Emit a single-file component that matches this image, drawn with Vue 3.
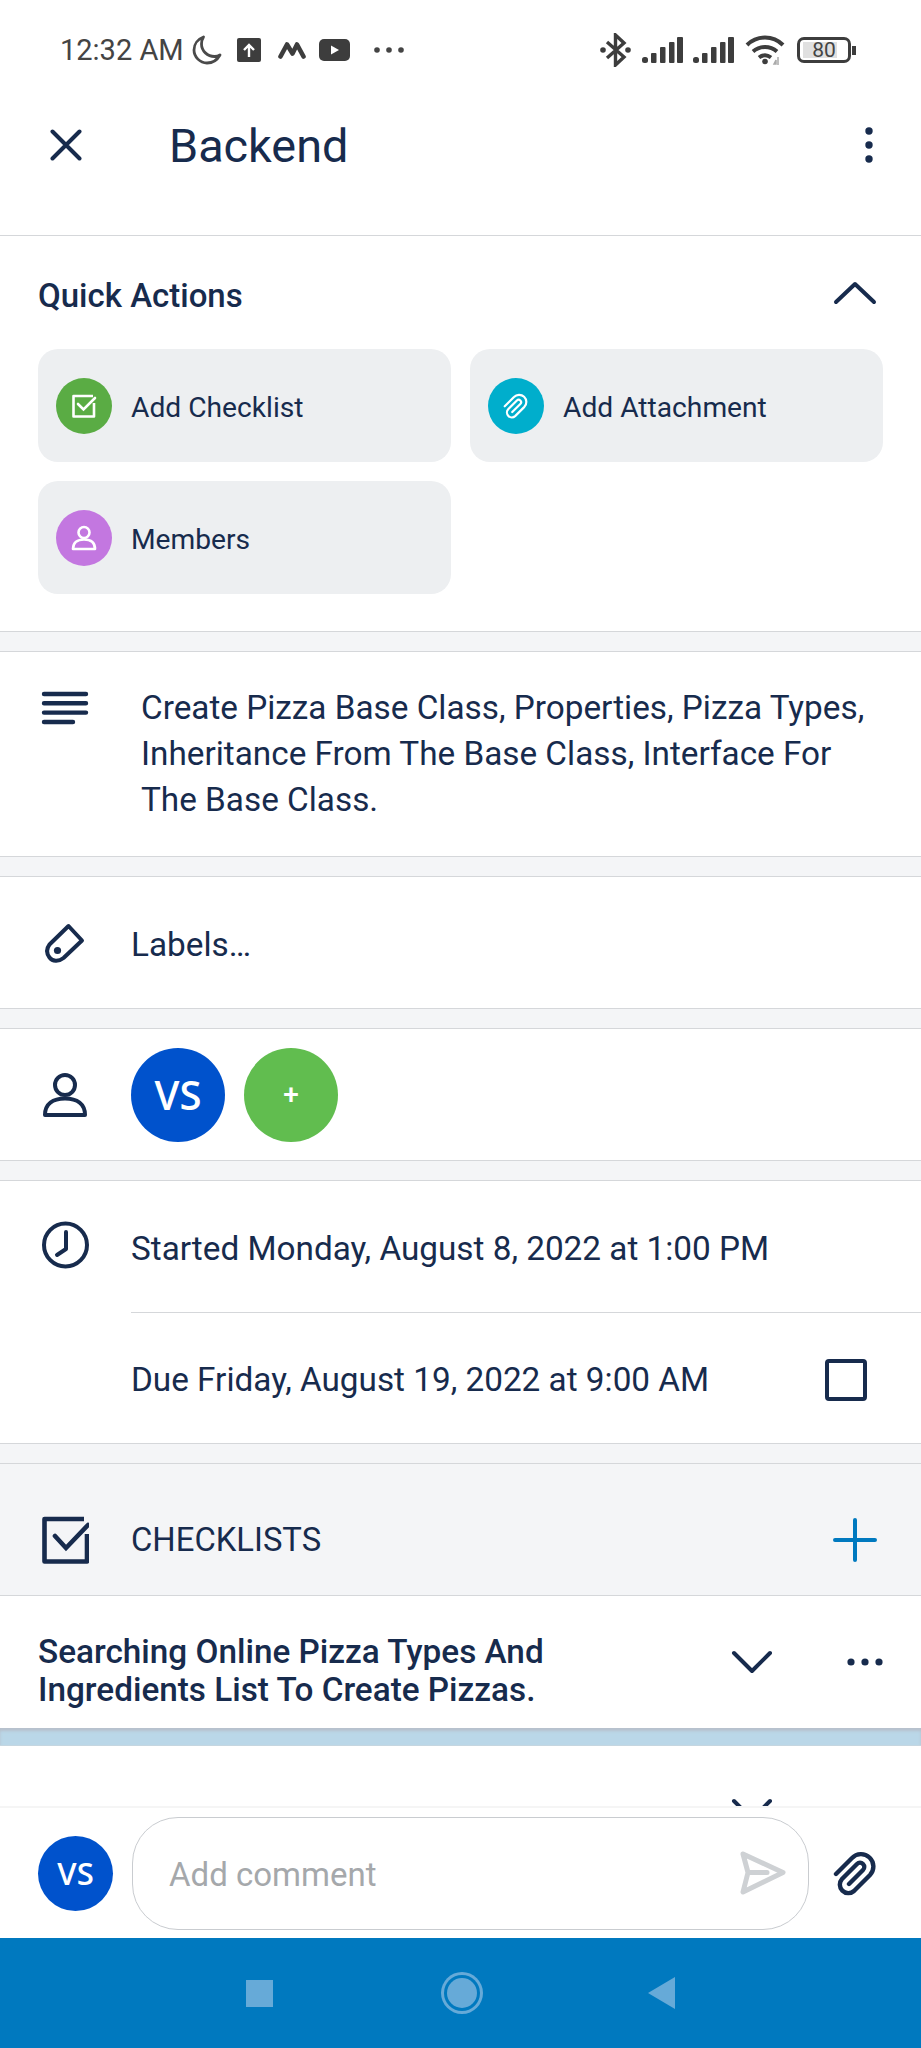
<script setup>
const clip = "M3 23 L19 7 A12 12 0 0 1 37 24 L21 40 A8.500 8.500 0 0 1 9 28 L24 13 A4 4 0 0 1 30 19 L16 33";
</script>

<template>
  <div class="page">
    <div class="status">
      <span class="time">12:32 AM</span>
      <svg class="moon" viewBox="0 0 30 30" width="30" height="30"><path d="M11.500 2C6 4 2 9 2 15c0 7 6 13 13 13 6 0 10.500-3.500 13-8-1.500 1-3.500 1.500-5.500 1.500-7 0-13-5.500-13-12.500 0-2.500.7-5 2-7z" fill="none" stroke="#4a4a4a" stroke-width="2.800" stroke-linejoin="round"/></svg>
      <svg class="st-up" viewBox="0 0 24 24" width="24" height="24"><rect width="24" height="24" rx="2" fill="#3d3d3d"/><path d="M12 19V7M7 12l5-5 5 5" fill="none" stroke="#fff" stroke-width="2.400"/></svg>
      <svg class="st-m" viewBox="0 0 28 18" width="28" height="18"><path d="M2.500 15.500 9 3.500l5.500 9L19 3.500l6.500 12" fill="none" stroke="#3d3d3d" stroke-width="4.600" stroke-linecap="round" stroke-linejoin="round"/></svg>
      <svg class="st-yt" viewBox="0 0 31 22" width="31" height="22"><rect width="31" height="22" rx="5" fill="#3d3d3d"/><path d="M12 6.500v9l8-4.500z" fill="#fff"/></svg>
      <svg class="st-dots" viewBox="0 0 30 6" width="30" height="6"><circle cx="3" cy="3" r="2.800" fill="#444"/><circle cx="15" cy="3" r="2.800" fill="#444"/><circle cx="27" cy="3" r="2.800" fill="#444"/></svg>
      <span class="spacer"></span>
      <svg class="st-bt" viewBox="0 0 31 34" width="31" height="34"><path d="M7 9 24 24 15.500 32V2L24 10 7 25" fill="none" stroke="#3d3d3d" stroke-width="3.400"/><circle cx="3" cy="17" r="2.800" fill="#3d3d3d"/><circle cx="28" cy="17" r="2.800" fill="#3d3d3d"/></svg>
      <svg class="st-sig" viewBox="0 0 41 26" width="41" height="26"><rect x="0" y="20" width="6" height="6" rx="2.500" fill="#3d3d3d"/><rect x="9" y="16" width="5.500" height="10" rx="1" fill="#3d3d3d"/><rect x="18" y="10" width="5.500" height="16" rx="1" fill="#3d3d3d"/><rect x="27" y="5" width="5.500" height="21" rx="1" fill="#3d3d3d"/><rect x="35" y="0" width="6" height="26" rx="1" fill="#3d3d3d"/></svg>
      <svg class="st-sig" viewBox="0 0 41 26" width="41" height="26"><rect x="0" y="20" width="6" height="6" rx="2.500" fill="#3d3d3d"/><rect x="9" y="16" width="5.500" height="10" rx="1" fill="#3d3d3d"/><rect x="18" y="10" width="5.500" height="16" rx="1" fill="#3d3d3d"/><rect x="27" y="5" width="5.500" height="21" rx="1" fill="#3d3d3d"/><rect x="35" y="0" width="6" height="26" rx="1" fill="#3d3d3d"/></svg>
      <svg class="st-wifi" viewBox="0 0 40 30" width="40" height="30"><path d="M2 10C12 0 28 0 38 10M8 16.500c7-6 17-6 24 0M14 22.500c4-3 8-3 12 0" fill="none" stroke="#3d3d3d" stroke-width="4"/><circle cx="20" cy="26.500" r="2.800" fill="#3d3d3d"/><path d="M33 22v8M29 29h2v-4z" stroke="#aaa" stroke-width="1.500" fill="#aaa"/></svg>
      <div class="battery"><span class="batt-fill"></span><span class="batt-num">80</span></div>
      <span class="batt-tip"></span>
    </div>

    <header class="top">
      <svg class="ic-x" viewBox="0 0 32 32" width="32" height="32"><path d="M2.500 2.500l27 27M29.500 2.500l-27 27" fill="none" stroke="#172b4d" stroke-width="4" stroke-linecap="round"/></svg>
      <h1 class="title">Backend</h1>
      <svg class="kebab" viewBox="0 0 8 36" width="8" height="36"><circle cx="4" cy="4" r="3.700" fill="#172b4d"/><circle cx="4" cy="18" r="3.700" fill="#172b4d"/><circle cx="4" cy="32" r="3.700" fill="#172b4d"/></svg>
    </header>

    <section class="block quick">
      <div class="qa-head">
        <span class="qa-title">Quick Actions</span>
        <svg viewBox="0 0 44 24" width="44" height="24"><path d="M3 21 22 3l19 18" fill="none" stroke="#172b4d" stroke-width="4" stroke-linecap="round" stroke-linejoin="round"/></svg>
      </div>
      <div class="qa-grid">
        <div class="qa-card">
          <span class="qa-dot green"><svg viewBox="0 0 26 26" width="26" height="26"><path d="M22 3H2.500v20.500h20.500V10" fill="none" stroke="#fff" stroke-width="2.600" stroke-linejoin="round"/><path d="M7 11l5.500 5.500L24 5" fill="none" stroke="#fff" stroke-width="2.600" stroke-linecap="round"/></svg></span>
          <span class="qa-label">Add Checklist</span>
        </div>
        <div class="qa-card">
          <span class="qa-dot cyan"><svg viewBox="0 0 45 45" width="26" height="26"><path :d="clip" fill="none" stroke="#fff" stroke-width="3.800" stroke-linecap="round"/></svg></span>
          <span class="qa-label">Add Attachment</span>
        </div>
        <div class="qa-card">
          <span class="qa-dot purple"><svg viewBox="0 0 26 26" width="26" height="26"><circle cx="13" cy="7.500" r="5.500" fill="none" stroke="#fff" stroke-width="2.600"/><path d="M2 24c0-6.500 4.500-9.500 11-9.500s11 3 11 9.500z" fill="none" stroke="#fff" stroke-width="2.600" stroke-linejoin="round"/></svg></span>
          <span class="qa-label">Members</span>
        </div>
      </div>
    </section>

    <section class="block desc">
      <svg class="ic-desc" viewBox="0 0 48 34" width="48" height="34"><path d="M3 3h42M3 12.300h42M3 21.600h42M3 31h29" fill="none" stroke="#172b4d" stroke-width="4.400" stroke-linecap="round"/></svg>
      <p class="desc-text">Create Pizza Base Class, Properties, Pizza Types, Inheritance From The Base Class, Interface For The Base Class.</p>
    </section>

    <section class="block row labels">
      <svg class="ic" viewBox="-4.500 -4.500 48 48" width="48" height="48"><path d="M23 2.500 36.500 17 18 34.500C13 38.500 7 38 4 34 1 30 1 25 4 21z" fill="none" stroke="#172b4d" stroke-width="4" stroke-linejoin="round"/><circle cx="12" cy="27" r="3.600" fill="#172b4d"/></svg>
      <span class="labels-text">Labels…</span>
    </section>

    <section class="block row members">
      <svg class="ic" viewBox="0 0 48 48" width="48" height="48"><circle cx="24" cy="14" r="10" fill="none" stroke="#172b4d" stroke-width="4"/><path d="M4 44c0-11 8-16.500 20-16.500S44 33 44 44z" fill="none" stroke="#172b4d" stroke-width="4" stroke-linejoin="round"/></svg>
      <span class="avatar blue">VS</span>
      <span class="avatar plus">+</span>
    </section>

    <section class="block dates">
      <svg class="ic clock" viewBox="0 0 48 48" width="48" height="48"><circle cx="24.500" cy="24" r="21.500" fill="none" stroke="#172b4d" stroke-width="4"/><path d="M25 11v17l-9 6" fill="none" stroke="#172b4d" stroke-width="4" stroke-linecap="round" stroke-linejoin="round"/></svg>
      <div class="date-list">
        <div class="date-row">Started Monday, August 8, 2022 at 1:00 PM</div>
        <div class="date-row second">
          <span>Due Friday, August 19, 2022 at 9:00 AM</span>
          <span class="check"></span>
        </div>
      </div>
    </section>

    <section class="cl-head">
      <svg class="ic" viewBox="0 0 48 48" width="48" height="48"><path d="M43 3H3.500v42.500H46V18" fill="none" stroke="#172b4d" stroke-width="4.600" stroke-linejoin="round"/><path d="M14 20l11 12L47 9" fill="none" stroke="#172b4d" stroke-width="4.600" stroke-linecap="round"/></svg>
      <span class="cl-label">CHECKLISTS</span>
      <svg class="cl-plus" viewBox="0 0 44 44" width="44" height="44"><path d="M22 2v40M2 22h40" fill="none" stroke="#0079bf" stroke-width="4" stroke-linecap="round"/></svg>
    </section>

    <section class="cl-item">
      <div class="cl-text">Searching Online Pizza Types And Ingredients List To Create Pizzas.</div>
      <svg class="chev" viewBox="0 0 44 26" width="44" height="26"><path d="M4 4l18 18L40 4" fill="none" stroke="#172b4d" stroke-width="4" stroke-linecap="round" stroke-linejoin="round"/></svg>
      <svg class="dots" viewBox="0 0 36 8" width="36" height="8"><circle cx="4" cy="4" r="3.600" fill="#172b4d"/><circle cx="18" cy="4" r="3.600" fill="#172b4d"/><circle cx="32" cy="4" r="3.600" fill="#172b4d"/></svg>
    </section>

    <div class="progress"></div>

    <section class="cl-next">
      <svg class="next-chev" viewBox="0 0 44 26" width="44" height="26"><path d="M4 4l18 18L40 4" fill="none" stroke="#172b4d" stroke-width="4" stroke-linecap="round" stroke-linejoin="round"/></svg>
    </section>

    <footer class="composer">
      <span class="me">VS</span>
      <div class="input">
        <span class="ph">Add comment</span>
        <svg viewBox="0 0 48 48" width="48" height="48"><path d="M5 5 45 23.500 5 43 10 23.500zM10 23.500h19" fill="none" stroke="#ced1d4" stroke-width="5" stroke-linejoin="round" stroke-linecap="round"/></svg>
      </div>
      <svg class="clip" viewBox="0 0 45 45" width="45" height="45"><path :d="clip" fill="none" stroke="#172b4d" stroke-width="4.400" stroke-linecap="round"/></svg>
    </footer>

    <nav class="navbar">
      <span class="nav-square"></span>
      <span class="nav-circle"></span>
      <svg viewBox="0 0 27 32" width="27" height="32"><path d="M27 0v32L0 16z" fill="#66aad8"/></svg>
    </nav>
  </div>
</template>

<style>
html, body { margin: 0; background: #fff; }
</style>

<style scoped>
.page { width: 921px; height: 2048px; overflow: hidden; display: flex; flex-direction: column; background: #f4f5f7; font-family: Roboto, sans-serif; color: #172b4d; font-size: 33.3px; }
.status { height: 90px; box-sizing: border-box; display: flex; align-items: center; padding: 10px 0 0 60px; color: #444; flex: none; background: #fff; }
.time { font-size: 29px; margin-right: 8px; }
.moon { margin-right: 15px; }
.st-up { margin-right: 17px; }
.st-m { margin-right: 13px; }
.st-yt { margin-right: 24px; }
.spacer { flex: 1; }
.st-bt { margin-right: 11px; }
.st-sig { margin-right: 10px; }
.st-wifi { margin-right: 12px; margin-left: 1px; }
.battery { position: relative; width: 54px; height: 26px; box-sizing: border-box; border: 3.500px solid #3d3d3d; border-radius: 7px; font-size: 21px; display: flex; align-items: center; justify-content: center; }
.batt-fill { position: absolute; left: 3px; top: 2px; bottom: 2px; width: 34px; background: #e0e0e0; }
.batt-num { position: relative; color: #444; }
.batt-tip { width: 4px; height: 9px; margin: 0 65px 0 1px; background: #3d3d3d; }
.top { height: 146px; box-sizing: border-box; flex: none; display: flex; align-items: center; padding: 0 48px 36px 50px; background: #fff; border-bottom: 1px solid #d5d7da; }
.title { font-size: 46.8px; font-weight: 400; margin: 2px 0 0 87px; flex: 1; }
.block { background: #fff; border-top: 1px solid #d5d7da; border-bottom: 1px solid #d5d7da; box-sizing: border-box; flex: none; }
.quick { height: 396px; border-top: 0; padding: 0 38px; margin-bottom: 19px; }
.qa-head { height: 113px; display: flex; align-items: center; justify-content: space-between; padding-right: 6px; font-size: 33px; font-weight: 500; }
.qa-title { padding-top: 5px; }
.qa-grid { display: grid; grid-template-columns: 413px 413px; column-gap: 19px; row-gap: 19px; font-size: 28.2px; }
.qa-card { height: 113px; background: #edeff1; border-radius: 20px; display: flex; align-items: center; gap: 19px; padding-left: 18px; }
.qa-label { padding-top: 3px; }
.qa-dot { width: 56px; height: 56px; border-radius: 50%; display: flex; align-items: center; justify-content: center; flex: none; }
.green { background: #5aac44; }
.cyan { background: #00aecc; }
.purple { background: #c377e0; }
.desc { height: 206px; margin-bottom: 19px; display: flex; padding: 33px 38px 0 41px; }
.desc-text { margin: 0 0 0 52px; line-height: 46px; }
.ic-desc { margin-top: 6px; flex: none; }
.row { display: flex; align-items: center; padding-left: 41px; margin-bottom: 19px; }
.ic { flex: none; margin-right: 42px; }
.labels { height: 133px; }
.labels-text { padding-top: 4px; }
.members { height: 133px; }
.avatar { width: 94px; height: 94px; border-radius: 50%; display: flex; align-items: center; justify-content: center; color: #fff; flex: none; }
.blue { background: #0052cc; font-size: 40px; font-weight: 600; margin-right: 19px; font-family: "Open Sans", sans-serif; }
.plus { background: #61bd4f; font-size: 28px; font-weight: 500; }
.dates { height: 264px; margin-bottom: 19px; display: flex; padding-left: 41px; }
.clock { margin-top: 40px; }
.date-list { flex: 1; }
.date-row { height: 132px; box-sizing: border-box; padding-top: 3px; display: flex; align-items: center; border-bottom: 1px solid #d5d7da; }
.date-row.second { height: 130px; border-bottom: 0; justify-content: space-between; padding-right: 54px; }
.check { width: 42px; height: 42px; box-sizing: border-box; border: 4.500px solid #172b4d; border-radius: 4px; }
.cl-head { height: 133px; flex: none; box-sizing: border-box; background: #f4f5f7; border-top: 1px solid #d5d7da; border-bottom: 1px solid #d5d7da; display: flex; align-items: center; padding: 20px 44px 0 41px; }
.cl-label { flex: 1; font-size: 32.8px; padding-top: 1px; }
.cl-item { height: 132px; flex: none; box-sizing: border-box; display: flex; align-items: center; padding: 0 0 0 38px; background: #fff; }
.cl-text { width: 530px; font-weight: 500; line-height: 38px; margin-top: 17px; flex: none; }
.chev { margin-left: 162px; }
.dots { margin-left: 73px; }
.progress { height: 17px; flex: none; background: #bad7e8; box-shadow: inset 0 3px 3px #b7c0cc; border-bottom: 1px solid #c5d6e0; }
.cl-next { height: 60px; flex: none; position: relative; overflow: hidden; background: #fff; }
.next-chev { position: absolute; left: 730px; top: 51px; }
.composer { height: 132px; flex: none; background: #fff; border-top: 2px solid #f5f5f5; display: flex; align-items: center; padding: 0 0 0 38px; box-sizing: border-box; }
.me { width: 75px; height: 75px; border-radius: 50%; background: #0052cc; color: #fff; font-size: 31px; font-weight: 600; display: flex; align-items: center; justify-content: center; font-family: "Open Sans", sans-serif; flex: none; }
.input { width: 677px; height: 113px; margin-left: 19px; box-sizing: border-box; border: 1px solid #c9ccd0; border-radius: 46px; display: flex; align-items: center; justify-content: space-between; padding: 0 22px 0 36px; }
.ph { color: #a5a8ab; font-size: 33px; padding-top: 2px; }
.clip { margin-left: 24px; }
.navbar { flex: 1; background: #0079bf; display: flex; align-items: center; justify-content: center; }
.nav-square { width: 27px; height: 27px; background: #66aad8; margin-right: 174px; }
.nav-circle { width: 30px; height: 30px; border-radius: 50%; background: #66aad8; box-shadow: 0 0 0 3px #0079bf, 0 0 0 6px #66aad8; margin-right: 171px; }
</style>
